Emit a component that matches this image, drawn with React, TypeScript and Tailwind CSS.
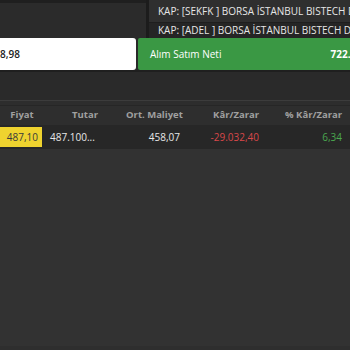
import React from "react";

export default function App() {
  const font = { fontFamily: '"Open Sans", "Liberation Sans", sans-serif' };
  return (
    <div className="w-[350px] h-[350px] overflow-hidden bg-[#323232] flex flex-col" style={font}>
      {/* top section */}
      <div className="flex h-[38px] shrink-0 bg-[#1f1f1f]">
        <div className="w-[146px] mt-[3px] bg-[#2b2b2b]" />
        <div className="w-[3px] bg-[#1c1c1c]" />
        <div className="flex-1 flex flex-col overflow-hidden">
          <div className="h-[22px] bg-[#2f2f2f] flex items-center pl-[9px] text-[10px] text-[#e6e6e6] whitespace-nowrap overflow-hidden">
            KAP: [SEKFK ] BORSA İSTANBUL BISTECH DUYURUSU
          </div>
          <div className="h-[1px] bg-[#1e1e1e]" />
          <div className="flex-1 bg-[#252525] flex items-center pl-[9px] text-[10px] text-[#e6e6e6] whitespace-nowrap overflow-hidden">
            KAP: [ADEL ] BORSA İSTANBUL BISTECH DUYURUSU
          </div>
        </div>
      </div>
      {/* summary boxes */}
      <div className="flex h-[32px] shrink-0 gap-[2px] bg-[#2a2a2a]">
        <div className="w-[136px] bg-white rounded-r-[3px] flex items-center text-[10px] font-semibold text-[#222]">
          8,98
        </div>
        <div className="flex-1 bg-[#3a9844] rounded-l-[2px] flex items-center justify-between pl-[12px] whitespace-nowrap overflow-hidden">
          <span className="text-[10px] text-white">Alım Satım Neti</span>
          <span className="text-[10px] font-bold text-white mr-[-32px]">722.418,98</span>
        </div>
      </div>
      <div className="h-[2px] bg-[#1f1f1f] shrink-0" />
      <div className="h-[28px] bg-[#2a2a2a] shrink-0" />
      <div className="h-[1px] bg-[#3c3c3c] shrink-0" />
      <div className="h-[4px] bg-[#2d2d2d] shrink-0" />
      <div className="h-[1px] bg-[#262626] shrink-0" />
      {/* header row */}
      <div className="h-[19px] bg-[#2e2e2e] shrink-0 flex items-center text-[9.5px] font-bold text-[#a0a0a0] whitespace-nowrap">
        <div className="w-[44px] text-center">Fiyat</div>
        <div className="w-[82px] text-center">Tutar</div>
        <div className="w-[56px] text-right">Ort. Maliyet</div>
        <div className="w-[77px] text-right">Kâr/Zarar</div>
        <div className="w-[83px] text-right">% Kâr/Zarar</div>
      </div>
      {/* data row */}
      <div className="h-[24px] bg-[#272727] shrink-0 flex items-center text-[10px] whitespace-nowrap">
        <div className="w-[42px] h-[20px] bg-[#efd32f] text-[#3a3a3a] flex items-center justify-end pr-[4px]">487,10</div>
        <div className="w-[82px] pl-[8px] text-[#e8e8e8]">487.100...</div>
        <div className="w-[56px] text-right text-[#e8e8e8]">458,07</div>
        <div className="w-[79px] text-right text-[#d9484a]">-29.032,40</div>
        <div className="w-[83px] text-right text-[#4aa84f]">6,34</div>
      </div>
      <div className="flex-1" />
      <div className="h-[4px] bg-[#2e2e2e] shrink-0" />
    </div>
  );
}
